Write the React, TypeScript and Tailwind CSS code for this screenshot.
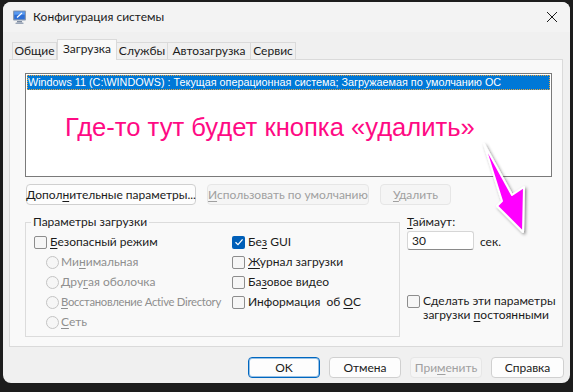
import type { ReactNode } from 'react';

const UI = 'font-["Lato",sans-serif]';

function U({ children }: { children: ReactNode }) {
    return <span className="underline underline-offset-[2px] decoration-[1px]">{children}</span>;
}

function Button({
    children,
    w,
    disabled,
    primary,
}: {
    children: ReactNode;
    w: string;
    disabled?: boolean;
    primary?: boolean;
}) {
    let cls = 'bg-[#fdfdfd] border-[#d0d0d0] text-[#1b1b1b]';
    if (disabled) cls = 'bg-[#f5f5f5] border-[#e6e6e6] text-[#a0a0a0]';
    if (primary) cls = 'bg-[#fdfdfd] border-[#0067c0] text-[#1b1b1b] ring-1 ring-inset ring-[#0067c0]/40';
    return (
        <div
            className={`${w} h-[21px] shrink-0 flex items-center justify-center rounded-[4px] border text-[12px] leading-none ${cls}`}
        >
            <span className="whitespace-nowrap">{children}</span>
        </div>
    );
}

function Check({ checked, label }: { checked?: boolean; label: ReactNode }) {
    return (
        <div className="h-[20px] flex items-center gap-[3px]">
            {checked ? (
                <div className="w-[13px] h-[13px] shrink-0 rounded-[2px] bg-[#005fb8] flex items-center justify-center">
                    <svg width="10" height="10" viewBox="0 0 10 10" fill="none">
                        <path d="M1.5 5.2 L4 7.6 L8.6 2.4" stroke="white" strokeWidth="1.3" />
                    </svg>
                </div>
            ) : (
                <div className="w-[13px] h-[13px] shrink-0 rounded-[2px] border border-[#8d8d8d] bg-[#f6f6f6]" />
            )}
            <span className="whitespace-nowrap text-[12px] leading-none text-[#1b1b1b]">{label}</span>
        </div>
    );
}

function Radio({ label, tight }: { label: ReactNode; tight?: boolean }) {
    return (
        <div className="h-[20px] flex items-center gap-[2px]">
            <div className="w-[13px] h-[13px] shrink-0 rounded-full border border-[#c4c4c4] bg-[#f6f6f6]" />
            <span
                className={`whitespace-nowrap leading-none text-[#8f8f8f] ${tight ? 'text-[11.3px] tracking-[-0.3px]' : 'text-[12px]'}`}
            >
                {label}
            </span>
        </div>
    );
}

export default function App() {
    const tabs = [
        { label: 'Общие', w: 'w-[45px]' },
        { label: 'Загрузка', w: 'w-[60px]', active: true },
        { label: 'Службы', w: 'w-[51px]' },
        { label: 'Автозагрузка', w: 'w-[83px]' },
        { label: 'Сервис', w: 'w-[45px]' },
    ];

    return (
        <div className={`relative w-[573px] h-[392px] bg-[#1d1d1d] pt-[2px] pl-[3px] pr-[3px] pb-[9px] ${UI}`}>
            <div className="h-full flex flex-col rounded-[8px] overflow-hidden bg-[#f0f0f0]">
                {/* Title bar */}
                <div className="h-[30px] shrink-0 bg-[#f3f3f3] flex items-center pl-[9px] pr-[8px]">
                    <svg width="16" height="16" viewBox="0 0 16 16" className="shrink-0">
                        <rect x="1" y="1.5" width="13" height="10" rx="1" fill="#8c9bb0" />
                        <rect x="2.2" y="2.7" width="10.6" height="7.6" fill="#2d6fd6" />
                        <rect x="2.2" y="2.7" width="10.6" height="3" fill="#5b9bf0" />
                        <path d="M5 8.5 L10 4" stroke="white" strokeWidth="1.2" />
                        <rect x="5" y="12" width="5" height="1.5" fill="#7f8ca0" />
                        <rect x="3.5" y="13.5" width="8" height="1.5" rx="0.5" fill="#9aa6b8" />
                    </svg>
                    <span className="ml-[5px] text-[12px] text-[#1b1b1b]">Конфигурация системы</span>
                    <div className="flex-1" />
                    <svg width="12" height="12" viewBox="0 0 12 12" className="mr-[4px]">
                        <path d="M1 1 L11 11 M11 1 L1 11" stroke="#1b1b1b" strokeWidth="1" />
                    </svg>
                </div>

                {/* Body */}
                <div className="flex-1 flex flex-col pl-[6px] pr-[7px] pt-[7px]">
                    {/* Tabs */}
                    <div className="h-[20px] flex items-end pl-[3px]">
                        {tabs.map((t) =>
                            t.active ? (
                                <div
                                    key={t.label}
                                    className={`${t.w} h-[21px] -mb-px relative z-10 bg-[#f9f9f9] border border-b-0 border-[#dadada] flex items-center justify-center pb-[2px] text-[12px] text-[#1b1b1b]`}
                                >
                                    {t.label}
                                </div>
                            ) : (
                                <div
                                    key={t.label}
                                    className={`${t.w} h-[17px] bg-[#f0f0f0] border border-b-0 border-l-0 first:border-l border-[#dadada] flex items-center justify-center text-[12px] text-[#1b1b1b]`}
                                >
                                    {t.label}
                                </div>
                            ),
                        )}
                    </div>

                    {/* Tab panel */}
                    <div className="w-[554px] h-[288px] bg-[#f9f9f9] border border-[#dadada] pl-[15px] pt-[13px] flex flex-col">
                        {/* Listbox */}
                        <div className="w-[527px] h-[104px] bg-white border border-[#7a7a7a] p-px flex flex-col">
                            <div className="h-[15px] bg-[#0078d7] outline-1 outline-dotted outline-[#e8a33d] -outline-offset-1 flex items-center pl-[1px]">
                                <span className='font-["Liberation_Sans",sans-serif] text-[10.8px] leading-none text-white whitespace-nowrap'>
                                    Windows 11 (C:\WINDOWS) : Текущая операционная система; Загружаемая по умолчанию ОС
                                </span>
                            </div>
                            <div className="flex-1 flex items-center pl-[38px] pb-[9px]">
                                <span className='font-["Liberation_Sans",sans-serif] text-[25.6px] leading-none text-[#ff0a84] whitespace-nowrap'>
                                    Где-то тут будет кнопка «удалить»
                                </span>
                            </div>
                        </div>

                        {/* Buttons row */}
                        <div className="mt-[7px] flex items-center gap-[11px] pl-[1px]">
                            <Button w="w-[170px]">
                                Допол<U>н</U>ительные параметры...
                            </Button>
                            <Button w="w-[162px]" disabled>
                                <U>И</U>спользовать по умолчанию
                            </Button>
                            <Button w="w-[71px]" disabled>
                                <U>У</U>далить
                            </Button>
                        </div>

                        {/* Lower section */}
                        <div className="mt-[10px] flex">
                            <fieldset className="w-[375px] h-[122px] border border-[#dcdcdc]">
                                <legend className="ml-[5px] px-[2px] text-[12px] leading-[14px] text-[#1b1b1b]">
                                    Параметры загрузки
                                </legend>
                                <div className="flex pl-[8px] pt-[3px]">
                                    <div className="w-[198px] shrink-0 flex flex-col">
                                        <Check label={<><U>Б</U>езопасный режим</>} />
                                        <div className="pl-[12px] flex flex-col">
                                            <Radio label={<>Ми<U>н</U>имальная</>} />
                                            <Radio label={<>Дру<U>г</U>ая оболочка</>} />
                                            <Radio tight label={<><U>В</U>осстановление Active Directory</>} />
                                            <Radio label={<><U>С</U>еть</>} />
                                        </div>
                                    </div>
                                    <div className="flex flex-col">
                                        <Check checked label={<>Бе<U>з</U> GUI</>} />
                                        <Check label={<><U>Ж</U>урнал загрузки</>} />
                                        <Check label={<>Ба<U>з</U>овое видео</>} />
                                        <Check label={<>Информация&nbsp; об <U>О</U>С</>} />
                                    </div>
                                </div>
                            </fieldset>

                            <div className="ml-[7px] flex flex-col">
                                <span className="text-[12px] leading-[14px] text-[#1b1b1b]">
                                    <U>Т</U>аймаут:
                                </span>
                                <div className="mt-[2px] flex items-end gap-[6px]">
                                    <div className="w-[67px] h-[19px] bg-white border border-[#d6d6d6] border-b-[#8a8a8a] rounded-[3px] flex items-center pl-[4px] text-[12px] text-[#1b1b1b]">
                                        30
                                    </div>
                                    <span className="text-[12px] leading-[14px] mb-[1px] text-[#1b1b1b]">сек.</span>
                                </div>
                                <div className="mt-[44px] flex gap-[3px]">
                                    <div className="mt-[1px] w-[13px] h-[13px] shrink-0 rounded-[2px] border border-[#8d8d8d] bg-[#f6f6f6]" />
                                    <span className="text-[12px] leading-[14px] text-[#1b1b1b]">
                                        Сделать эти параметры
                                        <br />
                                        загрузки <U>п</U>остоянными
                                    </span>
                                </div>
                            </div>
                        </div>
                    </div>

                    {/* Dialog buttons */}
                    <div className="mt-[10px] flex justify-end gap-[9px] mr-[-1px]">
                        <Button w="w-[72px]" primary>
                            OK
                        </Button>
                        <Button w="w-[72px]">Отмена</Button>
                        <Button w="w-[72px]" disabled>
                            При<U>м</U>енить
                        </Button>
                        <Button w="w-[73px]">Справка</Button>
                    </div>
                </div>
            </div>

            {/* Annotation arrow */}
            <svg className="absolute left-0 top-0 pointer-events-none" width="573" height="392" viewBox="0 0 573 392">
                <defs>
                    <filter id="sh" x="-50%" y="-50%" width="200%" height="200%">
                        <feDropShadow dx="1.5" dy="1.5" stdDeviation="1.5" floodColor="#000" floodOpacity="0.45" />
                    </filter>
                </defs>
                <polygon
                    points="484,144 512,195 524,187 523,232 497,206 502,201"
                    fill="#ff00ff"
                    stroke="white"
                    strokeWidth="2"
                    strokeLinejoin="round"
                    filter="url(#sh)"
                />
            </svg>
        </div>
    );
}
